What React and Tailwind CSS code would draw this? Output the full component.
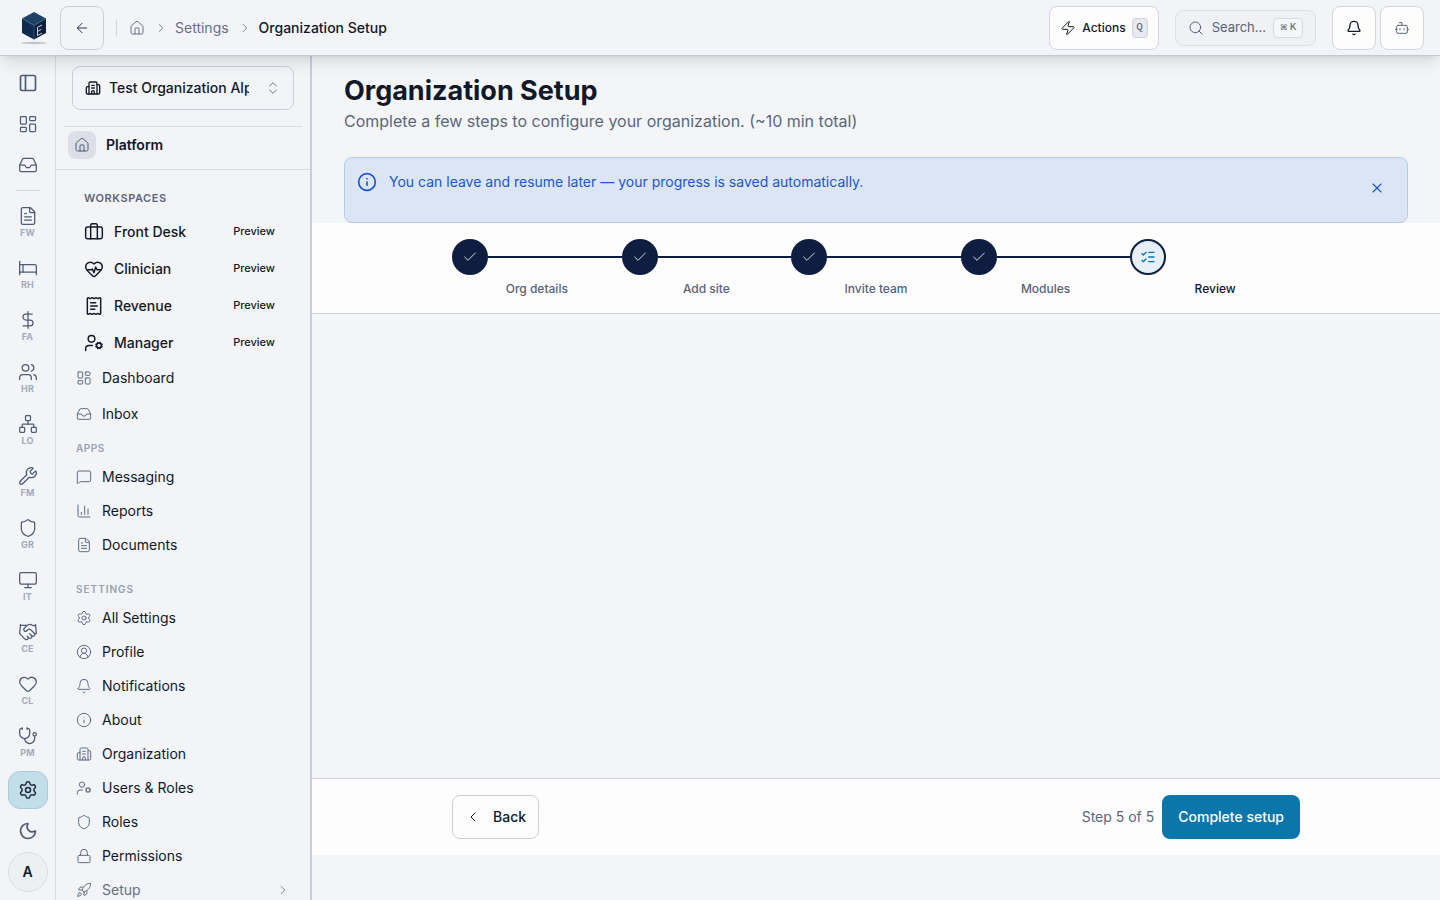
import React, { useState } from 'react'
import {
  ArrowLeft, Bed, Bell, Bot, Briefcase, Building2, ChartColumn, Check, ChevronLeft, ChevronRight,
  ChevronsUpDown, CircleUserRound, DollarSign, FileText, Handshake, Heart, HeartPulse, House, Inbox,
  Info, LayoutDashboard, ListChecks, Lock, MessageSquare, Monitor, Moon, Network, PanelLeft,
  ReceiptText, Rocket, Search, Settings, Shield, Stethoscope, UserCog, Users, Wrench, X, Zap,
} from 'lucide-react'

const railModules = [
  { code: 'FW', icon: FileText },
  { code: 'RH', icon: Bed },
  { code: 'FA', icon: DollarSign },
  { code: 'HR', icon: Users },
  { code: 'LO', icon: Network },
  { code: 'FM', icon: Wrench },
  { code: 'GR', icon: Shield },
  { code: 'IT', icon: Monitor },
  { code: 'CE', icon: Handshake },
  { code: 'CL', icon: Heart },
  { code: 'PM', icon: Stethoscope },
]

const workspaces = [
  { label: 'Front Desk', icon: Briefcase },
  { label: 'Clinician', icon: HeartPulse },
  { label: 'Revenue', icon: ReceiptText },
  { label: 'Manager', icon: UserCog },
]

const apps = [
  { label: 'Messaging', icon: MessageSquare },
  { label: 'Reports', icon: ChartColumn },
  { label: 'Documents', icon: FileText },
]

const settings = [
  { label: 'All Settings', icon: Settings },
  { label: 'Profile', icon: CircleUserRound },
  { label: 'Notifications', icon: Bell },
  { label: 'About', icon: Info },
  { label: 'Organization', icon: Building2 },
  { label: 'Users & Roles', icon: UserCog },
  { label: 'Roles', icon: Shield },
  { label: 'Permissions', icon: Lock },
]

const steps = ['Org details', 'Add site', 'Invite team', 'Modules', 'Review']
const currentStep = 4

const Logo = () => (
  <svg width="28" height="36" viewBox="0 0 28 36" aria-hidden="true">
    <path d="M14 2 26 8.500 14 15.500 2 8.500Z" fill="#1d4468" />
    <path d="M2 8.500 14 15.500V29.500L2 23Z" fill="#0e2a4c" />
    <path d="M26 8.500 14 15.500V29.500L26 23Z" fill="#101f3d" />
    <path d="M2 8.500 14 15.500 26 8.500M14 15.500V29.500" fill="none" stroke="#48779c" strokeWidth="0.500" />
    <path d="M22 15 17.500 17.300v8.200l4.500-2.300M17.500 21.400l3.700-1.900" fill="none" stroke="#c6d5e3" strokeWidth="1" />
    <ellipse cx="14" cy="33" rx="13" ry="1.200" fill="#c0c4cc" />
  </svg>
)

const Header = () => (
  <header className="relative z-10 flex h-14 shrink-0 items-center border-b border-[#c4c8d2] bg-[#f3f4f7] pr-4 pl-5 shadow-lg">
    <a href="#home" aria-label="Home page"><Logo /></a>
    <button aria-label="Go back" className="ml-3 flex size-11 items-center justify-center rounded-lg border border-[#cbced6] text-[#303746]">
      <ArrowLeft size={16} strokeWidth={1.5} />
    </button>
    <nav aria-label="Breadcrumb" className="ml-3 flex items-center border-l border-[#d0d3da] pl-3 text-sm leading-4 text-[#667085]">
      <a href="#home" aria-label="Home"><House size={16} strokeWidth={1.5} /></a>
      <ChevronRight size={14} strokeWidth={1.5} className="mr-[7px] ml-[9px]" />
      <a href="#settings">Settings</a>
      <ChevronRight size={14} strokeWidth={1.5} className="mr-[7px] ml-[9px]" />
      <span className="font-medium text-[#111827]">Organization Setup</span>
    </nav>
    <div className="ml-auto flex items-center">
      <button className="flex h-11 items-center gap-[6px] rounded-lg border border-[#d3d6de] bg-[#fdfdfe] px-[10px] text-xs font-medium text-[#111827]">
        <Zap size={16} strokeWidth={1.5} />
        Actions
        <kbd className="flex h-5 w-4 items-center justify-center rounded border border-[#cdd1dc] bg-[#e8eaf1] font-['Liberation_Mono',monospace] text-[11px] text-[#526078]">Q</kbd>
      </button>
      <button className="ml-4 flex h-9 items-center rounded-lg border border-[#dcdfe7] bg-[#eff1f5] px-3 text-[13px] text-[#56627a]">
        <Search size={16} strokeWidth={1.5} className="mr-2" />
        Search...
        <kbd className="ml-[7px] flex h-5 w-[30px] items-center justify-center gap-[2px] rounded border border-[#d5d9e2] bg-[#f5f6f9] font-['Liberation_Mono','DejaVu_Sans',monospace] text-[11px]">
          <span className="text-[8px]">⌘</span>K
        </kbd>
      </button>
      <button aria-label="Notifications" className="ml-4 flex size-11 items-center justify-center rounded-lg border border-[#d3d6de] bg-[#fdfdfe] text-[#111827]">
        <Bell size={16} strokeWidth={2} />
      </button>
      <button aria-label="Assistant" className="ml-1 flex size-11 items-center justify-center rounded-lg border border-[#d3d6de] bg-[#fdfdfe] text-[#5b667c]">
        <Bot size={16} strokeWidth={1.5} />
      </button>
    </div>
  </header>
)

const Rail = () => (
  <nav aria-label="Modules" className="flex w-14 shrink-0 flex-col items-center border-r border-[#d9dce4] bg-[#f2f4f8] pt-2 pb-2 text-[#4f5b73]">
    <div className="flex flex-col gap-[3px]">
      {[PanelLeft, LayoutDashboard, Inbox].map((Icon, i) => (
        <button key={i} aria-label={['Toggle sidebar', 'Dashboard', 'Inbox'][i]} className="flex h-[38px] w-10 items-center justify-center">
          <Icon size={20} strokeWidth={i === 0 ? 2 : 1.5} />
        </button>
      ))}
    </div>
    <div className="mt-[6px] mb-2 h-px w-6 shrink-0 bg-[#d5d8e0]" />
    <div className="flex flex-col gap-1">
      {railModules.map(({ code, icon: Icon }) => (
        <a key={code} href={`#${code}`} className="flex h-12 w-10 flex-col items-center justify-center">
          <Icon size={20} strokeWidth={1.5} />
          <span className="text-[9px] leading-[14px] font-bold tracking-wide text-[#a3abb9]">{code}</span>
        </a>
      ))}
      <a href="#settings" aria-label="Settings" className="flex h-[38px] w-10 items-center justify-center rounded-xl border border-[#a9cbdc] bg-[#c3dde9] text-[#1c2a3d]">
        <Settings size={20} strokeWidth={1.75} />
      </a>
    </div>
    <button aria-label="Dark mode" className="mt-auto mb-[2px] flex h-[38px] w-10 shrink-0 items-center justify-center">
      <Moon size={20} strokeWidth={2} />
    </button>
    <button aria-label="Account" className="size-10 shrink-0 rounded-full border border-[#d9dde2] bg-[#ecf0f3] text-sm font-semibold text-[#111827]">A</button>
  </nav>
)

const NavItem = ({ label, icon: Icon }) => (
  <a href={`#${label}`} className="flex h-[34px] shrink-0 items-center gap-[10px] pl-5 text-sm text-[#111827]">
    <Icon size={16} strokeWidth={1.5} className="text-[#5f6b80]" />
    {label}
  </a>
)

const Sidebar = () => (
  <aside className="flex w-64 shrink-0 flex-col overflow-hidden border-r-2 border-[#cbcdd8] bg-[#f2f4f8]">
    <div className="mx-4 mt-[10px] shrink-0">
      <button className="flex h-11 w-full items-center rounded-lg border border-[#cbced8] px-3 text-left text-sm font-medium text-[#111827]">
        <Building2 size={16} strokeWidth={2} className="mr-2 shrink-0" />
        <span className="w-[140px] overflow-hidden whitespace-nowrap">Test Organization Alpha</span>
        <ChevronsUpDown size={16} strokeWidth={1.5} className="ml-auto shrink-0 text-[#687386]" />
      </button>
    </div>
    <div className="mx-2 mt-4 h-px shrink-0 bg-[#d9dce3]" />
    <div className="flex h-[43px] shrink-0 items-center gap-[10px] border-b border-[#d9dce3] pb-[6px] pl-3 text-sm font-semibold text-[#111827]">
      <span className="flex size-7 items-center justify-center rounded-lg bg-[#dcdfe7] text-[#4f5b73]">
        <House size={16} strokeWidth={1.5} />
      </span>
      Platform
    </div>
    <h2 className="mt-5 mb-[7px] shrink-0 pl-7 text-[11px] leading-4 font-semibold tracking-wider text-[#5b667c]">WORKSPACES</h2>
    {workspaces.map(({ label, icon: Icon }) => (
      <a key={label} href={`#${label}`} className="flex h-[37px] shrink-0 items-center gap-[10px] pr-[35px] pl-7 text-sm font-medium text-[#111827]">
        <Icon size={20} strokeWidth={1.75} />
        {label}
        <span className="ml-auto text-[11px]">Preview</span>
      </a>
    ))}
    <div className="flex shrink-0 flex-col gap-[2px]">
      <NavItem label="Dashboard" icon={LayoutDashboard} />
      <NavItem label="Inbox" icon={Inbox} />
    </div>
    <h2 className="mt-[9px] mb-1 shrink-0 pl-5 text-[10px] leading-4 font-semibold tracking-wider text-[#98a1b0]">APPS</h2>
    {apps.map((item) => <NavItem key={item.label} {...item} />)}
    <h2 className="mt-[19px] mb-1 shrink-0 pl-5 text-[10px] leading-4 font-semibold tracking-widest text-[#98a1b0]">SETTINGS</h2>
    {settings.map((item) => <NavItem key={item.label} {...item} />)}
    <button className="flex h-[34px] shrink-0 items-center gap-[10px] pr-5 pl-5 text-sm text-[#667085]">
      <Rocket size={16} strokeWidth={1.5} />
      Setup
      <ChevronRight size={14} strokeWidth={1.5} className="ml-auto" />
    </button>
  </aside>
)

const Stepper = () => (
  <section className="shrink-0 border-b border-[#cdd0d8] bg-[#fdfdfe] px-8 py-4">
    <ol className="mx-auto flex max-w-[848px]">
      {steps.map((step, i) => (
        <li key={step} className="flex-1">
          <div className="flex items-center">
            {i < currentStep ? (
              <span className="flex size-9 shrink-0 items-center justify-center rounded-full bg-[#0f1e40] text-white">
                <Check size={16} strokeWidth={1.25} />
              </span>
            ) : (
              <span className="flex size-9 shrink-0 items-center justify-center rounded-full border-2 border-[#0f1e40] bg-[#e6eff6] text-[#0b76aa]">
                <ListChecks size={16} strokeWidth={2} />
              </span>
            )}
            {i < steps.length - 1 && <span className="h-[2px] flex-1 bg-[#0f1e40]" />}
          </div>
          <p className={`mt-[6px] text-center text-xs font-medium ${i === currentStep ? 'text-[#111827]' : 'text-[#56627a]'}`}>{step}</p>
        </li>
      ))}
    </ol>
  </section>
)

const App = () => {
  const [showNotice, setShowNotice] = useState(true)

  return (
    <div className="flex h-screen flex-col overflow-hidden bg-[#f3f5f7] font-['Inter',sans-serif]">
      <Header />
      <div className="flex min-h-0 flex-1">
        <Rail />
        <Sidebar />
        <main className="flex min-w-0 flex-1 flex-col overflow-y-auto pb-[45px]">
          <div className="shrink-0 px-8 pt-[17px]">
            <h1 className="text-[27px] leading-9 font-bold text-[#111827]">Organization Setup</h1>
            <p className="text-base text-[#5b667c]">Complete a few steps to configure your organization. (~10 min total)</p>
            {showNotice && (
              <div className="mt-6 flex h-[66px] justify-between rounded-lg border border-[#b3cbea] bg-[#dbe5f4] pr-2 pl-3 text-sm text-[#1d56c9]">
                <div className="mt-[14px] flex h-5 items-center gap-3">
                  <Info size={20} strokeWidth={2} />
                  You can leave and resume later — your progress is saved automatically.
                </div>
                <button aria-label="Dismiss" onClick={() => setShowNotice(false)} className="mt-2 flex size-11 items-center justify-center">
                  <X size={16} strokeWidth={1.75} />
                </button>
              </div>
            )}
          </div>
          <Stepper />
          <div className="flex-1" />
          <footer className="shrink-0 border-t border-[#cdd0d8] bg-[#fdfdfe] px-8 py-4">
            <div className="mx-auto flex max-w-[848px] items-center text-sm">
              <button className="flex h-11 items-center gap-3 rounded-lg border border-[#cbced6] px-3 font-medium text-[#111827]">
                <ChevronLeft size={16} strokeWidth={1.5} />
                Back
              </button>
              <span className="ml-auto text-[#5b667c]">Step 5 of 5</span>
              <button className="ml-2 h-11 rounded-lg bg-[#0b76aa] px-4 font-medium text-white">Complete setup</button>
            </div>
          </footer>
        </main>
      </div>
    </div>
  )
}

export default App
